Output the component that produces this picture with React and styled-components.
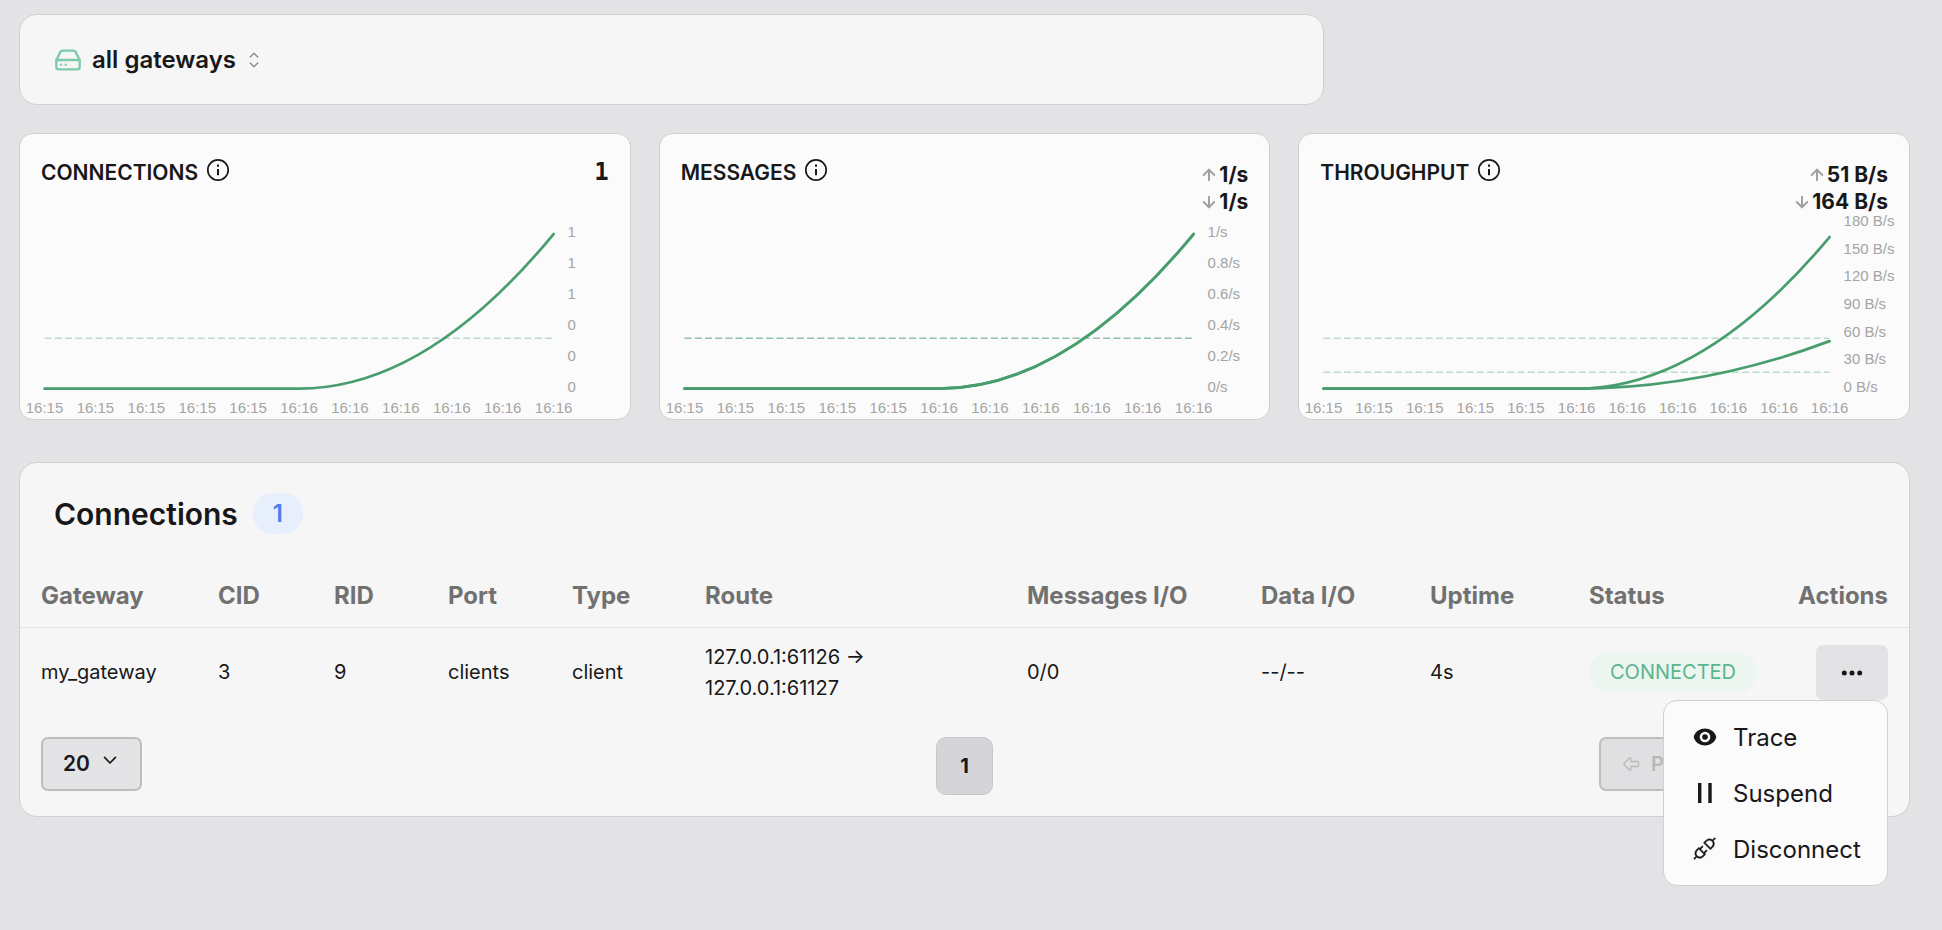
import React, { useState } from "react";
import styled, { createGlobalStyle } from "styled-components";
import { ArrowDown, ArrowUp, HardDrive } from "lucide-react";
import { HiChevronUpDown } from "react-icons/hi2";
import { TbArrowBigLeft, TbArrowBigRight } from "react-icons/tb";
import { VscDebugDisconnect } from "react-icons/vsc";

const colors = {
  page: "#e3e3e5",
  panel: "#f6f6f6",
  card: "#fbfbfb",
  border: "#d0d0d3",
  text: "#18181a",
  muted: "#717171",
  tick: "#a4a4a4",
  green: "#489d6e",
};

const GlobalStyle = createGlobalStyle`
  * {
    box-sizing: border-box;
  }

  body {
    margin: 0;
    background: ${colors.page};
    color: ${colors.text};
    font-family: Inter, "Liberation Sans", sans-serif;
    font-size: 20px;
  }

  button,
  select {
    margin: 0;
    color: inherit;
    font: inherit;
    cursor: pointer;
  }
`;

const Page = styled.main`
  min-height: 100vh;
  padding: 14px 32px 32px 19px;
`;

const Panel = styled.section`
  background: ${colors.panel};
  border: 1px solid ${colors.border};
  border-radius: 18px;
`;

const Toolbar = styled(Panel)`
  display: flex;
  align-items: center;
  gap: 10px;
  width: 69%;
  height: 91px;
  padding: 0 34px;

  & > svg {
    color: #7ccbaa;
  }
`;

const GatewayPicker = styled.div`
  display: grid;
  align-items: center;

  & > * {
    grid-area: 1 / 1;
  }

  svg {
    justify-self: end;
    color: #8e8e90;
    pointer-events: none;
  }
`;

const GatewaySelect = styled.select`
  appearance: none;
  width: 174px;
  padding: 1px 0 0;
  border: 0;
  background: none;
  font-size: 24px;
  font-weight: 600;
  line-height: 32px;
`;

const Charts = styled.div`
  display: grid;
  grid-template-columns: repeat(3, 1fr);
  gap: 28px;
  margin: 28px 0 42px;
`;

const Card = styled.article`
  background: ${colors.card};
  border: 1px solid ${colors.border};
  border-radius: 14px;
`;

const CardHeader = styled.header`
  display: flex;
  justify-content: space-between;
  height: 76px;
  padding: 0 21px;
`;

const CardTitle = styled.h2`
  display: flex;
  align-items: flex-start;
  gap: 8px;
  margin: 0;
  padding-top: 24px;
  font-size: 21px;
  font-weight: 600;
  line-height: 30px;
`;

const Total = styled.span`
  padding-top: 24px;
  font: bold 24px/28px "DejaVu Sans Mono", monospace;
`;

const Rates = styled.div`
  padding-top: 27px;
  font-size: 21px;
  font-weight: 700;
  line-height: 27px;
`;

const Rate = styled.div`
  display: flex;
  align-items: center;
  justify-content: flex-end;
  gap: 1px;

  svg {
    color: #a0a0a2;
  }
`;

const Plot = styled.svg`
  display: block;
  width: 100%;
  height: auto;
  overflow: visible;
`;

const Tick = styled.text`
  fill: ${colors.tick};
  font-family: "Liberation Sans", Arial, sans-serif;
  font-size: 15px;
`;

const Series = styled.path`
  fill: none;
  stroke: ${colors.green};
  stroke-width: 2.7;
  stroke-linecap: round;
`;

const Mean = styled.line`
  stroke: ${colors.green};
  stroke-opacity: 0.35;
  stroke-width: 1.5;
  stroke-dasharray: 7 3.2;
`;

const PanelHeader = styled.header`
  display: flex;
  align-items: center;
  gap: 15px;
  padding: 30px 34px;
`;

const PanelTitle = styled.h1`
  margin: 0;
  font-size: 30px;
  font-weight: 600;
  line-height: 40px;
`;

const Count = styled.span`
  padding: 0 20px;
  border-radius: 20px;
  background: #e8effc;
  color: #4d7fe8;
  font-size: 24px;
  font-weight: 600;
  line-height: 41px;
`;

const Table = styled.table`
  width: 100%;
  table-layout: fixed;
  border-collapse: collapse;
`;

const Col = styled.col`
  width: ${(props) => props.$width}px;
`;

const HeadCell = styled.th`
  height: 63px;
  padding: 0 21px;
  border-bottom: 1px solid #e4e4e6;
  color: ${colors.muted};
  font-size: 24px;
  font-weight: 700;
  text-align: ${(props) => (props.$end ? "right" : "left")};
  white-space: nowrap;
`;

const Cell = styled.td`
  padding: 14px 21px;
  line-height: 31px;
  text-align: ${(props) => (props.$end ? "right" : "left")};
  white-space: nowrap;
`;

const Status = styled.span`
  display: inline-block;
  padding: 0 21px;
  border-radius: 21px;
  background: #ecf5ef;
  color: #5bb58d;
  line-height: 41px;
`;

const Actions = styled.div`
  position: relative;
  display: flex;
  justify-content: flex-end;
`;

const MoreButton = styled.button`
  display: flex;
  align-items: center;
  justify-content: center;
  width: 72px;
  height: 55px;
  border: 0;
  border-radius: 7px;
  background: ${colors.page};
`;

const Menu = styled.div`
  position: absolute;
  z-index: 1;
  top: 100%;
  right: 0;
  width: 225px;
  padding: 8px 0;
  border: 1px solid ${colors.border};
  border-radius: 14px;
  background: ${colors.card};
`;

const MenuItem = styled.button`
  display: flex;
  align-items: center;
  gap: 15px;
  width: 100%;
  height: 56px;
  padding: 0 0 0 28px;
  border: 0;
  background: none;
  font-size: 24px;
`;

const Pager = styled.footer`
  display: grid;
  grid-template-columns: 1fr auto 1fr;
  align-items: start;
  padding: 19px 21px 21px;
`;

const PageSize = styled.div`
  display: grid;
  align-items: center;
  justify-self: start;
  width: 101px;
  border: 2px solid #bebebf;
  border-radius: 7px;
  background: #e4e4e6;

  & > * {
    grid-area: 1 / 1;
  }

  svg {
    justify-self: end;
    margin: 0 23px 6px;
    pointer-events: none;
  }
`;

const PageSizeSelect = styled.select`
  appearance: none;
  height: 50px;
  padding: 0 20px;
  border: 0;
  background: none;
  font-size: 21px;
  font-weight: 600;
`;

const PageButton = styled.button`
  width: 57px;
  height: 58px;
  border: 1px solid #c8c8cb;
  border-radius: 10px;
  background: #d5d5d9;
  font-weight: 700;
`;

const Steps = styled.div`
  display: grid;
  grid-template-columns: 1fr 1fr;
  justify-self: end;
  width: 289px;
`;

const StepButton = styled.button`
  display: flex;
  align-items: center;
  gap: 10px;
  height: 54px;
  padding: 0 20px;
  border: 2px solid #bebebf;
  border-radius: ${(props) => (props.$last ? "0 7px 7px 0" : "7px 0 0 7px")};
  background: #e0e0e2;
  color: #b9b9bb;
  font-weight: 600;
`;

const InfoIcon = () => (
  <svg width="24" height="24" viewBox="0 0 24 24" fill="none" stroke="currentColor" strokeWidth="1.7">
    <circle cx="12" cy="12" r="10.2" />
    <path d="M12 11v6.2M12 6.6v2.2" strokeWidth="2" />
  </svg>
);

const ChevronIcon = () => (
  <svg width="14" height="9" viewBox="0 0 14 9" fill="none" stroke="currentColor" strokeWidth="1.7">
    <path d="M1.6 1.4 7 7l5.400-5.600" strokeLinecap="round" strokeLinejoin="round" />
  </svg>
);

const DotsIcon = () => (
  <svg width="22" height="6" viewBox="0 0 22 6" fill="currentColor">
    <circle cx="3.3" cy="3" r="2.5" />
    <circle cx="11" cy="3" r="2.5" />
    <circle cx="18.7" cy="3" r="2.5" />
  </svg>
);

const EyeIcon = () => (
  <svg width="26" height="26" viewBox="0 0 26 26" fill="currentColor">
    <path
      fillRule="evenodd"
      d="M13 4.500c5 0 9.300 2.900 11 7.200q.5 1.300 0 2.600c-1.700 4.300-6 7.200-11 7.200s-9.300-2.900-11-7.200q-.5-1.300 0-2.600c1.700-4.300 6-7.200 11-7.200zm0 3.200a5.300 5.300 0 1 0 0 10.600 5.300 5.300 0 0 0 0-10.600z"
    />
    <circle cx="13" cy="13" r="2.8" />
  </svg>
);

const PauseIcon = () => (
  <svg width="26" height="26" viewBox="0 0 26 26" fill="currentColor">
    <path d="M6 3h3.400v20H6zM16.300 3h3.400v20h-3.400z" />
  </svg>
);

const times = ["16:15", "16:15", "16:15", "16:15", "16:15", "16:16", "16:16", "16:16", "16:16", "16:16", "16:16"];

const metrics = [
  {
    title: "CONNECTIONS",
    total: "1",
    ticks: ["0", "0", "0", "1", "1", "1"],
    top: 27,
    right: 533,
    lines: [{ peak: 24, mean: 128 }],
  },
  {
    title: "MESSAGES",
    rates: ["1/s", "1/s"],
    ticks: ["0/s", "0.2/s", "0.4/s", "0.6/s", "0.8/s", "1/s"],
    top: 27,
    right: 533,
    lines: [
      { peak: 24, mean: 128 },
      { peak: 24, mean: 128 },
    ],
  },
  {
    title: "THROUGHPUT",
    rates: ["51 B/s", "164 B/s"],
    ticks: ["0 B/s", "30 B/s", "60 B/s", "90 B/s", "120 B/s", "150 B/s", "180 B/s"],
    top: 16,
    right: 530,
    lines: [
      { peak: 131, mean: 162 },
      { peak: 27, mean: 128 },
    ],
  },
];

const LEFT = 24.5;
const BASE = 178.5;

// flat for the first half, then rises with the square of the time
const curve = (right, peak) => {
  const start = (LEFT + right) / 2;
  const bend = (start + right) / 2;
  return `M${LEFT} ${BASE}H${start}Q${bend} ${BASE} ${right} ${peak}`;
};

const Chart = ({ title, ticks, top, right, lines }) => (
  <Plot viewBox="0 0 609 209" role="img" aria-label={title}>
    {lines.map((line, i) => (
      <g key={i}>
        <Mean x1={LEFT} x2={right} y1={line.mean} y2={line.mean} />
        <Series d={curve(right, line.peak)} />
      </g>
    ))}
    {ticks.map((tick, i) => (
      <Tick key={i} x={right + 14} y={182 - ((182 - top) * i) / (ticks.length - 1)}>
        {tick}
      </Tick>
    ))}
    {times.map((time, i) => (
      <Tick key={i} x={LEFT + ((right - LEFT) * i) / (times.length - 1)} y={203} textAnchor="middle">
        {time}
      </Tick>
    ))}
  </Plot>
);

const MetricCard = ({ metric }) => (
  <Card>
    <CardHeader>
      <CardTitle>
        {metric.title}
        <InfoIcon />
      </CardTitle>
      {metric.total && <Total>{metric.total}</Total>}
      {metric.rates && (
        <Rates>
          <Rate>
            <ArrowUp size={18} strokeWidth={2.6} />
            {metric.rates[0]}
          </Rate>
          <Rate>
            <ArrowDown size={18} strokeWidth={2.6} />
            {metric.rates[1]}
          </Rate>
        </Rates>
      )}
    </CardHeader>
    <Chart {...metric} />
  </Card>
);

const columns = [
  { label: "Gateway", width: 177 },
  { label: "CID", width: 116 },
  { label: "RID", width: 114 },
  { label: "Port", width: 124 },
  { label: "Type", width: 133 },
  { label: "Route", width: 322 },
  { label: "Messages I/O", width: 234 },
  { label: "Data I/O", width: 169 },
  { label: "Uptime", width: 159 },
  { label: "Status", width: 200 },
  { label: "Actions", width: 141, end: true },
];

const ActionsMenu = () => {
  const [open, setOpen] = useState(true);
  return (
    <Actions>
      <MoreButton aria-label="Actions" aria-expanded={open} onClick={() => setOpen(!open)}>
        <DotsIcon />
      </MoreButton>
      {open && (
        <Menu role="menu">
          <MenuItem role="menuitem">
            <EyeIcon />
            Trace
          </MenuItem>
          <MenuItem role="menuitem">
            <PauseIcon />
            Suspend
          </MenuItem>
          <MenuItem role="menuitem">
            <VscDebugDisconnect size={26} strokeWidth={0.3} />
            Disconnect
          </MenuItem>
        </Menu>
      )}
    </Actions>
  );
};

export default function App() {
  return (
    <Page>
      <GlobalStyle />
      <Toolbar>
        <HardDrive size={28} strokeWidth={2} />
        <GatewayPicker>
          <GatewaySelect aria-label="Gateway">
            <option>all gateways</option>
            <option>my_gateway</option>
          </GatewaySelect>
          <HiChevronUpDown size={24} />
        </GatewayPicker>
      </Toolbar>

      <Charts>
        {metrics.map((metric) => (
          <MetricCard key={metric.title} metric={metric} />
        ))}
      </Charts>

      <Panel>
        <PanelHeader>
          <PanelTitle>Connections</PanelTitle>
          <Count>1</Count>
        </PanelHeader>
        <Table>
          <colgroup>
            {columns.map((col) => (
              <Col key={col.label} $width={col.width} />
            ))}
          </colgroup>
          <thead>
            <tr>
              {columns.map((col) => (
                <HeadCell key={col.label} $end={col.end}>
                  {col.label}
                </HeadCell>
              ))}
            </tr>
          </thead>
          <tbody>
            <tr>
              <Cell>my_gateway</Cell>
              <Cell>3</Cell>
              <Cell>9</Cell>
              <Cell>clients</Cell>
              <Cell>client</Cell>
              <Cell>
                127.0.0.1:61126 →
                <br />
                127.0.0.1:61127
              </Cell>
              <Cell>0/0</Cell>
              <Cell>--/--</Cell>
              <Cell>4s</Cell>
              <Cell>
                <Status>CONNECTED</Status>
              </Cell>
              <Cell $end>
                <ActionsMenu />
              </Cell>
            </tr>
          </tbody>
        </Table>
        <Pager>
          <PageSize>
            <PageSizeSelect aria-label="Rows per page">
              <option>20</option>
              <option>50</option>
              <option>100</option>
            </PageSizeSelect>
            <ChevronIcon />
          </PageSize>
          <PageButton aria-current="page">1</PageButton>
          <Steps>
            <StepButton disabled>
              <TbArrowBigLeft size={20} strokeWidth={1.6} />
              Prev
            </StepButton>
            <StepButton disabled $last>
              Next
              <TbArrowBigRight size={20} strokeWidth={1.6} />
            </StepButton>
          </Steps>
        </Pager>
      </Panel>
    </Page>
  );
}
